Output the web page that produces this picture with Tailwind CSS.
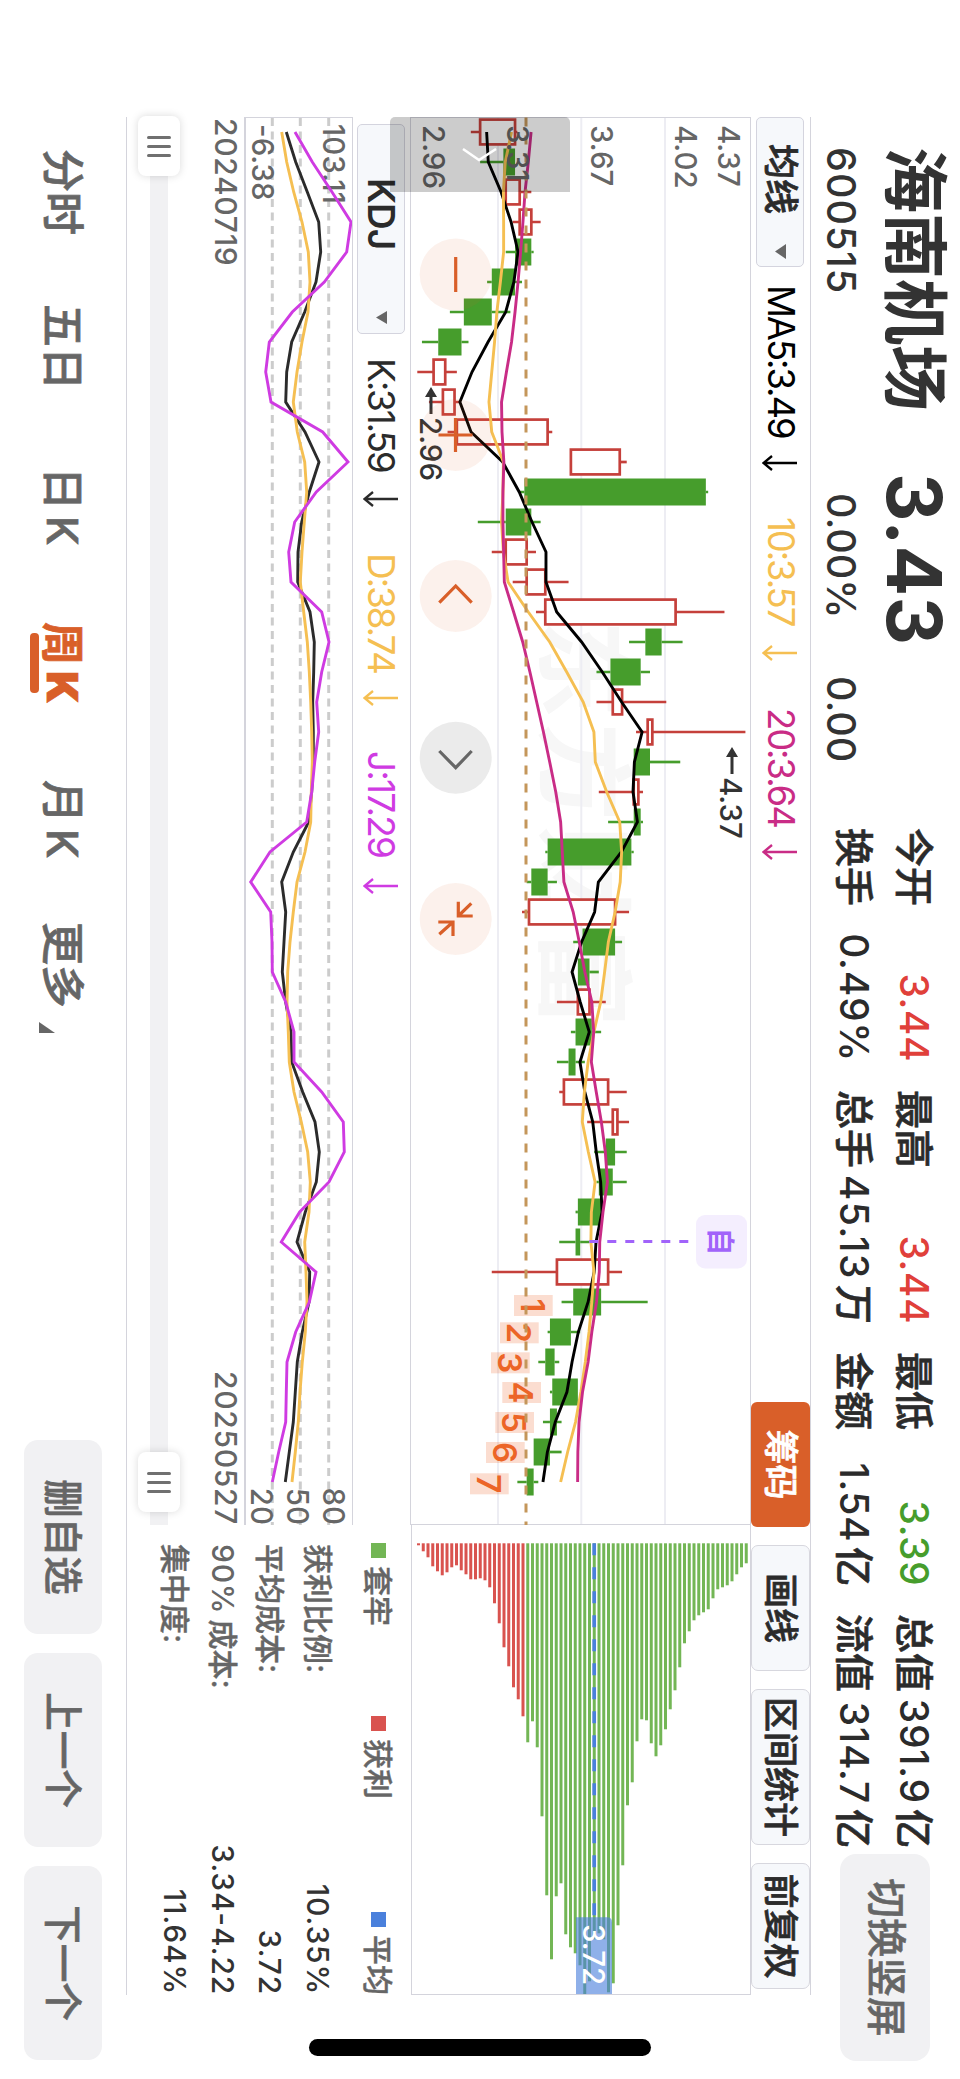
<!DOCTYPE html>
<html lang="zh-CN">
<head>
  <meta charset="UTF-8" />
  <title>海南机场 600515</title>
  <script src="https://cdn.jsdelivr.net/npm/@tailwindcss/browser@4"></script>
</head>
<body class="bg-white">
  <div class="w-[960px] h-[2079px] overflow-hidden">
    <!-- landscape screen, turned clockwise -->
    <div class="relative w-[2079px] h-[960px] origin-top-left translate-x-[960px] rotate-90 flex flex-col leading-none text-[#2b2b2b] whitespace-nowrap font-['Inter','Noto_Sans_CJK_SC',sans-serif]">

      <header class="flex h-[149px] shrink-0">
        <div class="w-[828px] pl-[147px] text-[#333]">
          <div class="flex items-center h-[90px]">
            <h1 class="w-[326px] text-[66px] font-bold">海南机场</h1>
            <span class="text-[75px] font-bold tracking-[0.3px]">3.43</span>
          </div>
          <div class="flex items-center h-[60px] text-[39.5px] font-medium">
            <span class="w-[346px] tracking-[1px]">600515</span>
            <span class="w-[183px]">0.00%</span>
            <span>0.00</span>
          </div>
        </div>
        <div class="grid grid-cols-4 gap-x-[28px] w-[1020px] h-[120px] mt-[15px] text-[39px] font-medium">
          <div class="flex items-center justify-between"><span class="[-webkit-text-stroke:0.6px]">今开</span><span class="text-[#e0403a] tracking-[0.5px]">3.44</span></div>
          <div class="flex items-center justify-between"><span class="[-webkit-text-stroke:0.6px]">最高</span><span class="text-[#e0403a] tracking-[0.5px]">3.44</span></div>
          <div class="flex items-center justify-between"><span class="[-webkit-text-stroke:0.6px]">最低</span><span class="text-[#469d2c] tracking-[0.5px]">3.39</span></div>
          <div class="flex items-center justify-between"><span class="[-webkit-text-stroke:0.6px]">总值</span><span class="tracking-[0.8px]">391.9<span class="ml-[5px] tracking-normal [-webkit-text-stroke:0.6px]">亿</span></span></div>
          <div class="flex items-center justify-between"><span class="[-webkit-text-stroke:0.6px]">换手</span><span class="tracking-[0.8px]">0.49%</span></div>
          <div class="flex items-center justify-between"><span class="[-webkit-text-stroke:0.6px]">总手</span><span class="tracking-[1.5px]">45.13<span class="ml-[5px] tracking-normal [-webkit-text-stroke:0.6px]">万</span></span></div>
          <div class="flex items-center justify-between"><span class="[-webkit-text-stroke:0.6px]">金额</span><span class="tracking-[0.5px]">1.54<span class="ml-[5px] tracking-normal [-webkit-text-stroke:0.6px]">亿</span></span></div>
          <div class="flex items-center justify-between"><span class="[-webkit-text-stroke:0.6px]">流值</span><span class="tracking-[0.8px]">314.7<span class="ml-[5px] tracking-normal [-webkit-text-stroke:0.6px]">亿</span></span></div>
        </div>
        <button class="ml-[6px] mt-[30px] w-[207px] h-[90px] rounded-[16px] bg-[#f1f1f3] text-[#666] text-[39.5px] font-medium [-webkit-text-stroke:0.6px]">切换竖屏</button>
      </header>

      <main class="ml-[117px] w-[1878px] h-[685px] shrink-0 border-b border-[#d4d4dc]">
        <div class="flex items-center h-[61px] border-y border-[#d4d4dc] text-[36.5px]">
          <button class="flex items-center justify-between w-[150px] h-[48px] pl-[26px] pr-[7px] rounded-[5px] border border-[#d4d4de] bg-[#f6f8fb] text-[35px] font-medium [-webkit-text-stroke:0.8px]">
            均线
            <svg class="w-[15px] h-[13px]" viewBox="0 0 15 13"><path d="M0 1H15L7.5 12Z" fill="#666" /></svg>
          </button>
          <div class="flex items-center w-[231px] pl-[18px] text-black">
            <span class="w-[170px] tracking-[-2.1px]">MA5:3.49</span>
            <svg class="w-[16px] h-[36px]" viewBox="0 0 16 36" fill="none" stroke="currentColor" stroke-width="2.3"><path d="M8 1V34M1 26L8 34.5L15 26" /></svg>
          </div>
          <div class="flex items-center w-[192px] pl-[19px] text-[#f5bf52]">
            <span class="w-[128px] tracking-[-2.1px]">10:3.57</span>
            <svg class="w-[16px] h-[36px]" viewBox="0 0 16 36" fill="none" stroke="currentColor" stroke-width="2.3"><path d="M8 1V34M1 26L8 34.5L15 26" /></svg>
          </div>
          <div class="flex items-center pl-[18px] text-[#c92c86]">
            <span class="w-[136px] tracking-[-2.1px]">20:3.64</span>
            <svg class="w-[16px] h-[36px]" viewBox="0 0 16 36" fill="none" stroke="currentColor" stroke-width="2.3"><path d="M8 1V34M1 26L8 34.5L15 26" /></svg>
          </div>
          <div class="flex gap-[18px] ml-auto mr-[6px] text-[35px] font-medium [-webkit-text-stroke:0.7px]">
            <button class="w-[125px] h-[59px] rounded-[6px] bg-[#d95f29] text-white">筹码</button>
            <button class="w-[126px] h-[59px] rounded-[7px] border border-[#d7d7de] bg-[#f6f8fb]">画线</button>
            <button class="w-[156px] h-[59px] rounded-[7px] border border-[#d7d7de] bg-[#f6f8fb]">区间统计</button>
            <button class="w-[126px] h-[59px] rounded-[7px] border border-[#d7d7de] bg-[#f6f8fb]">前复权</button>
          </div>
        </div>

        <div class="flex">
          <section class="w-[1408px]">
            <svg id="candles" class="block w-[1408px] h-[339px]" viewBox="117 210 1408 339"></svg>

            <div class="flex items-center h-[59px] pl-[7px] border-y border-[#d4d4dc] text-[37px]">
              <button class="flex items-center justify-between w-[210px] h-[48px] pl-[53px] pr-[9px] rounded-[5px] border border-[#d4d4de] bg-[#f6f8fb] font-semibold tracking-[-1px]">
                KDJ
                <svg class="w-[13px] h-[12px]" viewBox="0 0 13 12"><path d="M0 0H13L6.5 11Z" fill="#666" /></svg>
              </button>
              <div class="flex items-center w-[194px] pl-[24px] text-[#2b2b2b]">
                <span class="w-[133px] tracking-[-2.2px]">K:31.59</span>
                <svg class="w-[16px] h-[36px]" viewBox="0 0 16 36" fill="none" stroke="currentColor" stroke-width="2.3"><path d="M8 1V34M1 26L8 34.5L15 26" /></svg>
              </div>
              <div class="flex items-center w-[198px] pl-[25px] text-[#f5bf52]">
                <span class="w-[137px] tracking-[-2.2px]">D:38.74</span>
                <svg class="w-[16px] h-[36px]" viewBox="0 0 16 36" fill="none" stroke="currentColor" stroke-width="2.3"><path d="M8 1V34M1 26L8 34.5L15 26" /></svg>
              </div>
              <div class="flex items-center pl-[25px] text-[#cf3be2]">
                <span class="w-[127px] tracking-[-1.9px]">J:17.29</span>
                <svg class="w-[16px] h-[36px]" viewBox="0 0 16 36" fill="none" stroke="currentColor" stroke-width="2.3"><path d="M8 1V34M1 26L8 34.5L15 26" /></svg>
              </div>
            </div>

            <svg id="kdj" class="block w-[1408px] h-[108px]" viewBox="117 608 1408 108"></svg>

            <div class="flex justify-between h-[64px] pt-[3px] pl-px text-[30px] leading-[30px] text-[#666] font-medium tracking-[0.7px]">
              <span>20240719</span><span>20250527</span>
            </div>

            <div class="flex items-center h-[42px] bg-[linear-gradient(#f1f1f3,#f1f1f3)] bg-[length:100%_18px] bg-center bg-no-repeat">
              <div class="flex items-center justify-center gap-[6px] w-[60px] h-[42px] -ml-px rounded-[8px] bg-white shadow-[0_0_8px_rgba(0,0,0,0.15)]">
                <i class="w-[3px] h-[24px] rounded-full bg-[#707070]"></i><i class="w-[3px] h-[24px] rounded-full bg-[#707070]"></i><i class="w-[3px] h-[24px] rounded-full bg-[#707070]"></i>
              </div>
              <div class="flex items-center justify-center gap-[6px] w-[60px] h-[42px] ml-auto mr-[13px] rounded-[8px] bg-white shadow-[0_0_8px_rgba(0,0,0,0.15)]">
                <i class="w-[3px] h-[24px] rounded-full bg-[#707070]"></i><i class="w-[3px] h-[24px] rounded-full bg-[#707070]"></i><i class="w-[3px] h-[24px] rounded-full bg-[#707070]"></i>
              </div>
            </div>
          </section>

          <section class="w-[470px]">
            <svg id="chips" class="block w-[470px] h-[339px]" viewBox="1525 210 470 339"></svg>
            <div class="flex justify-between items-center h-[65px] mb-[5px] pl-[18px] text-[30px] font-medium text-[#666] [-webkit-text-stroke:0.4px]">
              <span class="flex items-center gap-[8px]"><i class="size-[15px] bg-[#73b655]"></i>套牢</span>
              <span class="flex items-center gap-[8px] mr-[23px]"><i class="size-[15px] bg-[#d9534f]"></i>获利</span>
              <span class="flex items-center gap-[8px]"><i class="size-[15px] bg-[#4a80dc]"></i>平均</span>
            </div>
            <dl class="pl-[19px] text-[30px] leading-[47.7px] text-[#333] font-medium tracking-[0.8px]">
              <div class="flex justify-between"><dt class="text-[#666] tracking-normal [-webkit-text-stroke:0.4px]">获利比例:</dt><dd>10.35%</dd></div>
              <div class="flex justify-between"><dt class="text-[#666] tracking-normal [-webkit-text-stroke:0.4px]">平均成本:</dt><dd>3.72</dd></div>
              <div class="flex justify-between"><dt class="text-[#666]">90%<span class="ml-[5px] tracking-normal [-webkit-text-stroke:0.4px]">成本:</span></dt><dd>3.34-4.22</dd></div>
              <div class="flex justify-between"><dt class="text-[#666] tracking-normal [-webkit-text-stroke:0.4px]">集中度:</dt><dd>11.64%</dd></div>
            </dl>
          </section>
        </div>
      </main>

      <footer class="flex items-center h-[126px] pl-[149px] text-[43px] font-medium text-[#666] [-webkit-text-stroke:0.7px]">
        <span class="w-[155px]">分时</span>
        <span class="w-[163px]">五日</span>
        <span class="flex gap-[6px] w-[155px]">日<b class="font-medium">K</b></span>
        <span class="relative flex gap-[6px] w-[158px] text-[#d95f29] font-bold">周<b>K</b><i class="absolute left-[11px] -bottom-[11px] w-[60px] h-[9px] rounded-[4px] bg-[#d95f29]"></i></span>
        <span class="flex gap-[6px] w-[142px]">月<b class="font-medium">K</b></span>
        <span class="flex items-end w-[519px]">更多<svg class="w-[11px] h-[16px] ml-[14px] -mb-[2px]" viewBox="0 0 11 16"><path d="M0 16H11V0Z" fill="#666" /></svg></span>
        <div class="flex gap-[19px] -ml-px text-[38.5px]">
          <button class="w-[194px] h-[78px] rounded-[14px] bg-[#f1f1f3]">删自选</button>
          <button class="w-[194px] h-[78px] rounded-[14px] bg-[#f1f1f3]">上一个</button>
          <button class="w-[194px] h-[78px] rounded-[14px] bg-[#f1f1f3]">下一个</button>
        </div>
      </footer>

      <!-- drawer handle over both charts -->
      <div class="absolute left-[117px] top-[390px] w-[75px] h-[180px] rounded-l-[5px] bg-black/20">
        <svg class="absolute left-[31px] top-[73px] w-[14px] h-[36px]" viewBox="0 0 14 36" fill="none" stroke="#fff" stroke-width="2.5"><path d="M1 1L12 18L1 34" /></svg>
      </div>
      <!-- home indicator -->
      <div class="absolute left-[2039px] top-[309px] w-[17px] h-[342px] rounded-full bg-black"></div>
    </div>
  </div>

  <script>
    const RED = '#c5403b', GREEN = '#469d2c';
    const x = i => 132 + i * 30;
    // prices are given in ticks of 0.01 above 2.96
    const y = t => 542.7 - t * 2.327;
    const poly = (pts, f, color) =>
      `<polyline points="${pts.map((p, i) => x(i) + ',' + f(p)).join(' ')}" fill="none" stroke="${color}" stroke-width="2.9"/>`;
    const label = (X, Y, s, color = '#666', extra = '') =>
      `<text x="${X}" y="${Y}" font-size="29.5" font-weight="500" fill="${color}" ${extra}>${s}</text>`;

    // [up, low, body low, body high, high]
    const candles = [
      [1,23,27,42,43],[0,27,37,42,42],[1,38,38,44,49],[1,41,44,49,53],[0,38,42,49,50],
      [0,30,32,42,45],[0,14,20,32,40],[0,2,9,19,22],[1,0,7,12,17],[1,5,11,16,18],
      [1,13,17,56,58],[1,66,66,87,90],[0,44,46,124,125],[0,26,38,49,53],[1,32,38,47,51],
      [1,41,47,55,65],[1,51,55,111,132],[0,91,98,105,114],[0,77,83,96,100],[1,77,84,88,107],
      [1,94,99,101,141],[0,93,93,100,113],[1,78,93,95,97],[0,82,93,96,97],[0,55,56,92,93],
      [0,47,49,56,60],[1,45,48,85,91],[0,67,71,85,88],[0,69,69,74,78],[1,60,69,74,81],
      [0,66,68,75,79],[0,60,65,68,72],[1,61,63,82,90],[1,73,84,86,91],[0,76,81,85,90],
      [0,77,78,84,90],[0,68,69,79,79],[0,61,68,70,74],[1,32,60,82,88],[0,62,67,79,99],
      [0,56,57,66,70],[0,52,55,59,61],[0,57,58,69,69],[0,54,57,60,62],[0,50,50,57,62],[0,43,47,50,52]
    ];
    const ma5 = [29.8,30.5,36,40.3,43.3,41.5,38,30.4,23.5,18.3,23.1,36.7,43.8,49.3,55.3,55.3,59.9,70.6,79.5,87.8,96.6,93.3,92.7,94.6,87.7,77.8,76.2,70.6,66.5,70,73.9,69.9,72,75.4,76.9,78.8,79.4,76.8,76,73.4,69.2,66.5,64.3,59.3,55.9,54];
    const ma10 = [40.5,37.8,37,37.1,37.1,35.7,34.2,33.2,32,30.8,32,37,36.8,36.2,37,39,47.7,56.9,64.2,71.3,75.9,76.5,81.4,87,87.8,87.2,85,82.1,80.5,78.8,75.9,73.4,71.8,70.9,73.5,76.4,74.8,74.6,75.9,75,73.8,72.2,70.3,68,64.6,61.6];
    const ma20 = [48.9,47.7,46.3,45.4,44.4,43.3,42,40.5,38.3,36.2,36.4,37.2,36.8,36.8,37.1,37.4,41.4,45.3,48.4,51.3,54.2,56.9,59.5,61.6,62.3,63,67,69.6,72,75,75.8,74.8,76.9,79.1,80.8,81.7,79.8,78.4,78.2,77,75,73.4,71,69.5,69,68.9];

    let s = '';
    s += `<text x="620" y="412" font-size="98" font-weight="700" fill="#f7f7f7" letter-spacing="5">东方财富</text>`;
    for (const gy of [295, 378.7, 462]) s += `<path d="M117 ${gy}H1525" stroke="#ededf3" stroke-width="2"/>`;
    s += `<path d="M117.5 210V549M1524.5 210V549" stroke="#d4d4dc"/>`;
    candles.forEach(([up, lo, a, b, hi], i) => {
      const c = up ? RED : GREEN;
      s += `<path d="M${x(i)} ${y(lo)}V${y(a)}M${x(i)} ${y(b)}V${y(hi)}" stroke="${c}" stroke-width="2.7"/>`;
      s += up
        ? `<rect x="${x(i) - 12.4}" y="${y(b)}" width="24.8" height="${y(a) - y(b)}" fill="#fff" stroke="${c}" stroke-width="2.7"/>`
        : `<rect x="${x(i) - 13.5}" y="${y(b)}" width="27" height="${y(a) - y(b)}" fill="${c}"/>`;
    });
    s += poly(ma5, y, '#000') + poly(ma10, y, '#f5bf52') + poly(ma20, y, '#c92c86');
    // countdown numbers under the last candles
    [[1295,407.3],[1322.3,421.3],[1352.3,430.3],[1382,419],[1412,426],[1442,435.3],[1473.3,451.3]].forEach(([X, Y], i) => {
      s += `<rect x="${X}" y="${Y}" width="21" height="38.7" fill="#ec6527" fill-opacity=".22"/>`;
      s += `<text x="${X + 10.5}" y="${Y + 32}" text-anchor="middle" font-size="33" font-weight="600" fill="#ec6527">${i + 1}</text>`;
    });
    s += `<path d="M117.5 434H1525" stroke="#c4965a" stroke-width="3" stroke-dasharray="9 9"/>`;
    s += label(125, 242, '4.37') + label(125, 285, '4.02') + label(125, 369, '3.67') + label(125, 453, '3.31') + label(125, 537, '2.96');
    s += label(417, 540, '2.96', '#333') + label(777, 240, '4.37', '#333');
    s += `<path d="M395 529H414M755 228H774" stroke="#333" stroke-width="3"/><path d="M387 529L397 523V535ZM747 228L757 222V234Z" fill="#333"/>`;
    // disclosure marker
    s += `<path d="M1241.5 370.7V271" stroke="#a163fa" stroke-width="3" stroke-dasharray="9 9"/>`;
    s += `<rect x="1215" y="213" width="53.5" height="51" rx="9" fill="#f4eefe"/><text x="1241.5" y="250" text-anchor="middle" font-size="28" font-weight="700" fill="#a163fa">自</text>`;
    // round tool buttons
    for (const cx of [274.5, 435, 596, 919]) s += `<circle cx="${cx}" cy="504.3" r="36" fill="#d95f29" fill-opacity=".09"/>`;
    s += `<circle cx="757.7" cy="504.3" r="36" fill="#ebebeb"/>`;
    s += `<g fill="none" stroke="#d95f29" stroke-width="3.2">
      <path d="M257 504.3H292M418 504.5H452M435 487.5V521.5M602.7 520.7L586 504.3L602.7 488.3"/>
      <path d="M903.3 488.7L916 501.7M901.7 501.7H916V487.3M922 521.7V507H936M934.3 520.7L922 507"/></g>`;
    s += `<path d="M751 520.7L767.7 504.3L751 488.3" fill="none" stroke="#666" stroke-width="3.2"/>`;
    document.getElementById('candles').innerHTML = s;

    // KDJ, y positions
    const k = [673.7,664.3,652.7,641.3,639.3,644,655.3,668.3,673.3,674.3,655,641,650.7,658.3,662,662.3,650,645.7,646.3,647.3,646.7,646.7,648.3,651.3,666.7,678.3,674.3,676,677.7,674.3,669,668.3,657.3,645,640.7,643.7,654.7,663,650.3,651,657.7,662.7,664.7,666.7,670.7,674.7];
    const d = [678.3,673.3,666.3,658,651.7,650,652,658,663,666.7,662.7,655.3,653.3,655.7,658,659.7,656.3,652.7,650.7,649.3,648.3,647.7,648.7,649.3,655,663,666.7,670,672.3,673,671.7,670.7,666,658.7,652.3,649.7,651,655.3,654,653,654.7,657.7,660,661.7,664.7,668];
    const j = [665,647.7,628,609,613.3,635.7,667.7,690.7,694.3,689,637.3,612,643.7,665.3,671.3,669,638.3,631,638.3,643.3,641.3,645.3,648.3,653.3,690,709.3,689.3,688,687.7,674.3,666,666,638.3,616.7,615.7,631,660.3,678.7,644,650.7,664.3,673,673.7,674.3,681.3,687.7];
    const same = v => v;
    s = `<path d="M117.5 608V715" stroke="#d4d4dc"/><path d="M117 715H1525" stroke="#d4d4dc" stroke-width="2"/>`;
    for (const gy of [631.3, 659.7, 687.7]) s += `<path d="M118 ${gy}H1525" stroke="#ccc" stroke-width="3" stroke-dasharray="8 5.5"/>`;
    s += label(124, 637.3, '103.11') + label(124, 708, '-6.38');
    s += label(1525, 637, '80', '#666', 'text-anchor="end"') + label(1525, 673, '50', '#666', 'text-anchor="end"') + label(1525, 709, '20', '#666', 'text-anchor="end"');
    s += poly(k, same, '#2b2b2b') + poly(d, same, '#f5bf52') + poly(j, same, '#cf3be2');
    document.getElementById('kdj').innerHTML = s;

    // chip distribution, lowest price first
    const chips = [2,8,14,23,28,32,29,24,22,27,31,36,36,35,37,44,60,80,104,123,144,156,173,199,178,204,273,352,416,353,340,391,404,410,422,451,438,396,390,396,449,440,382,322,262,239,198,176,177,200,213,202,186,166,147,124,100,88,77,72,69,66,55,46,44,42,38,31,24,20];
    s = chips.map((w, i) => `<rect x="1543.3" y="${540 - i * 4.75}" width="${w}" height="3" fill="${i < 23 ? '#d9534f' : '#73b655'}"/>`).join('');
    s += `<path d="M1543.3 365.8H1917" stroke="#4a80dc" stroke-width="3.7" stroke-dasharray="12 12"/>`;
    s += `<path d="M1917.3 384V353Q1917.3 348 1922.3 348H1995V384Z" fill="#4a80dc" fill-opacity=".62"/>`;
    s += label(1924, 377, '3.72', '#fff');
    s += `<path d="M1994.5 210V549M1525 548.5H1995" stroke="#d4d4dc" fill="none"/>`;
    document.getElementById('chips').innerHTML = s;
  </script>
</body>
</html>
